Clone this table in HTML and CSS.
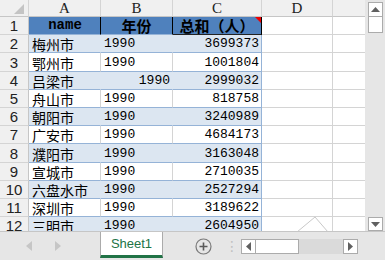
FILE: index.html
```html
<html lang="zh">
<head>
    <meta charset="UTF-8">
    <meta name="viewport" content="width=device-width, initial-scale=1.0">
    <title>Sheet1</title>
    <link rel="stylesheet" href="styles.css">
</head>
<body>
    <div class="app">
        <div class="top">
            <div class="sheet">
                <div class="grid">
                    <div class="row">
                        <div class="corner"><svg width="11" height="11"><polygon points="10,0 10,10 0,10" fill="#c4c4c4"/></svg></div>
                        <div class="colhead">A</div>
                        <div class="colhead">B</div>
                        <div class="colhead">C</div>
                        <div class="colhead">D</div>
                        <div class="colhead"></div>
                    </div>
                    <div class="row">
                        <div class="rowhead">1</div>
                        <div class="cell tc th">name</div>
                        <div class="cell tc th cjk">年份</div>
                        <div class="cell tc th cjk last note">总和（人）</div>
                        <div class="cell"></div>
                        <div class="cell"></div>
                    </div>
                    <div class="row alt">
                        <div class="rowhead">2</div>
                        <div class="cell tc cjk">梅州市</div>
                        <div class="cell tc">1990</div>
                        <div class="cell tc last num">3699373</div>
                        <div class="cell"></div>
                        <div class="cell"></div>
                    </div>
                    <div class="row">
                        <div class="rowhead">3</div>
                        <div class="cell tc cjk">鄂州市</div>
                        <div class="cell tc">1990</div>
                        <div class="cell tc last num">1001804</div>
                        <div class="cell"></div>
                        <div class="cell"></div>
                    </div>
                    <div class="row alt">
                        <div class="rowhead">4</div>
                        <div class="cell tc cjk">吕梁市</div>
                        <div class="cell tc num">1990</div>
                        <div class="cell tc last num">2999032</div>
                        <div class="cell"></div>
                        <div class="cell"></div>
                    </div>
                    <div class="row">
                        <div class="rowhead">5</div>
                        <div class="cell tc cjk">舟山市</div>
                        <div class="cell tc">1990</div>
                        <div class="cell tc last num">818758</div>
                        <div class="cell"></div>
                        <div class="cell"></div>
                    </div>
                    <div class="row alt">
                        <div class="rowhead">6</div>
                        <div class="cell tc cjk">朝阳市</div>
                        <div class="cell tc">1990</div>
                        <div class="cell tc last num">3240989</div>
                        <div class="cell"></div>
                        <div class="cell"></div>
                    </div>
                    <div class="row">
                        <div class="rowhead">7</div>
                        <div class="cell tc cjk">广安市</div>
                        <div class="cell tc">1990</div>
                        <div class="cell tc last num">4684173</div>
                        <div class="cell"></div>
                        <div class="cell"></div>
                    </div>
                    <div class="row alt">
                        <div class="rowhead">8</div>
                        <div class="cell tc cjk">濮阳市</div>
                        <div class="cell tc">1990</div>
                        <div class="cell tc last num">3163048</div>
                        <div class="cell"></div>
                        <div class="cell"></div>
                    </div>
                    <div class="row">
                        <div class="rowhead">9</div>
                        <div class="cell tc cjk">宣城市</div>
                        <div class="cell tc">1990</div>
                        <div class="cell tc last num">2710035</div>
                        <div class="cell"></div>
                        <div class="cell"></div>
                    </div>
                    <div class="row alt">
                        <div class="rowhead">10</div>
                        <div class="cell tc cjk">六盘水市</div>
                        <div class="cell tc">1990</div>
                        <div class="cell tc last num">2527294</div>
                        <div class="cell"></div>
                        <div class="cell"></div>
                    </div>
                    <div class="row">
                        <div class="rowhead">11</div>
                        <div class="cell tc cjk">深圳市</div>
                        <div class="cell tc">1990</div>
                        <div class="cell tc last num">3189622</div>
                        <div class="cell"></div>
                        <div class="cell"></div>
                    </div>
                    <div class="row alt">
                        <div class="rowhead">12</div>
                        <div class="cell tc cjk">三明市</div>
                        <div class="cell tc">1990</div>
                        <div class="cell tc last num">2604950</div>
                        <div class="cell"></div>
                        <div class="cell"></div>
                    </div>
                </div>
                <!-- floating shape on the sheet -->
                <svg class="shape" width="33" height="16"><polyline points="1,16 19,1 32,16" fill="none" stroke="#c8c8c8"/></svg>
            </div>
            <div class="vscroll">
                <div class="sbtn"><svg width="9" height="5"><polygon points="0,5 4.5,0 9,5" fill="#606060"/></svg></div>
                <div class="thumb"></div>
                <div class="track"></div>
                <div class="sbtn down"><svg width="9" height="5"><polygon points="0,0 9,0 4.5,5" fill="#606060"/></svg></div>
            </div>
        </div>
        <div class="bottom">
            <div class="nav">
                <svg width="6" height="10"><polygon points="6,0 6,10 0,5" fill="#c6c6c6"/></svg>
                <svg width="6" height="10"><polygon points="0,0 0,10 6,5" fill="#c6c6c6"/></svg>
            </div>
            <div class="tab">Sheet1</div>
            <svg class="add" width="17" height="17"><circle cx="8.5" cy="8.5" r="7.5" fill="none" stroke="#7a7a7a" stroke-width="1.2"/><path d="M4.5 8.5h8M8.5 4.5v8" stroke="#5a5a5a" stroke-width="1.6"/></svg>
            <div class="dots">⋮</div>
            <div class="hscroll">
                <div class="sbtn"><svg width="5" height="9"><polygon points="5,0 5,9 0,4.5" fill="#606060"/></svg></div>
                <div class="hthumb"></div>
                <div class="htrack"></div>
                <div class="sbtn"><svg width="5" height="9"><polygon points="0,0 0,9 5,4.5" fill="#606060"/></svg></div>
            </div>
        </div>
    </div>
</body>
</html>
```

FILE: styles.css
```css
*{
    margin: 0; padding: 0;
    box-sizing: border-box;
}
body{
    width: 385px;
    height: 260px;
    overflow: hidden;
    background-color: #e6e6e6;
    font-family: "Liberation Mono", monospace;
    color: #000;
}
.app{
    display: flex;
    flex-direction: column;
    height: 260px;
}
.top{
    display: flex;
    height: 232px;
    border-bottom: 1px solid #c6c6c6;
}
.sheet{
    position: relative;
    width: 365px;
    overflow: hidden;
    background-color: #fff;
}
.grid{
    display: grid;
    grid-template-columns: 29px 72px 72px 89px 71px 33px;
    grid-template-rows: 17px;
    grid-auto-rows: 18.2px;
}
.row{
    display: contents;
}
.corner, .colhead{
    background-color: #f0f0f0;
    border-right: 1px solid #d4d4d4;
    border-bottom: 1px solid #c6c6c6;
}
.corner{
    display: flex;
    justify-content: flex-end;
    align-items: flex-end;
    padding: 0 3px 1px 0;
}
.colhead{
    display: flex;
    justify-content: center;
    align-items: center;
    font-family: "Liberation Serif", serif;
    font-size: 15px;
    color: #222;
}
.rowhead{
    background-color: #f0f0f0;
    border-right: 1px solid #c6c6c6;
    border-bottom: 1px solid #d4d4d4;
    display: flex;
    justify-content: center;
    align-items: flex-end;
    padding-bottom: 1px;
    font-family: "Liberation Sans", sans-serif;
    font-size: 15px;
    line-height: 1;
    color: #222;
}
.cell{
    border-right: 1px solid #d4d4d4;
    border-bottom: 1px solid #d4d4d4;
    display: flex;
    align-items: flex-end;
    padding: 0 2px 2px 3px;
    font-size: 13px;
    line-height: 1;
    white-space: nowrap;
    overflow: hidden;
}
.tc{
    border-bottom-color: #95b3d7;
}
.alt .tc{
    background-color: #dce6f1;
    border-right-color: #dce6f1;
}
.tc.last{
    border-right-color: #95b3d7;
}
.cjk{
    font-family: "Noto Sans CJK SC", sans-serif;
    font-size: 14px;
    padding-bottom: 1px;
}
.num{
    justify-content: flex-end;
}
.th{
    background-color: #4f81bd;
    border-right-color: #000;
    font-size: 14px;
    font-weight: bold;
    justify-content: center;
    align-items: center;
    overflow: visible;
}
.th.cjk{
    font-size: 15px;
    padding: 0;
}
.th.last{
    border-right-color: #000;
    border-bottom-color: #222;
}
.note{
    position: relative;
}
/* comment marker */
.note::after{
    content: "";
    position: absolute;
    top: 0; right: 0;
    border-top: 6px solid #e00;
    border-left: 6px solid transparent;
}
.shape{
    position: absolute;
    left: 296px;
    top: 216px;
}
.vscroll{
    flex: 1;
    display: flex;
    flex-direction: column;
    padding: 2px 2px 0 3px;
}
.sbtn{
    width: 15px;
    height: 15px;
    background-color: #fff;
    border: 1px solid #ababab;
    display: flex;
    justify-content: center;
    align-items: center;
}
.sbtn.down{
    height: 14px;
}
.thumb{
    height: 16px;
    background-color: #fff;
    border: 1px solid #ababab;
    border-top: none;
}
.track{
    flex: 1;
}
.bottom{
    flex: 1;
    display: flex;
    align-items: center;
}
.nav{
    width: 100px;
    display: flex;
    gap: 23px;
    padding-left: 26px;
}
.tab{
    align-self: flex-start;
    width: 63px;
    height: 26px;
    background-color: #fff;
    border-left: 1px solid #ababab;
    border-right: 1px solid #ababab;
    border-bottom: 3px solid #217346;
    display: flex;
    justify-content: center;
    align-items: center;
    font-family: "Liberation Sans", sans-serif;
    font-size: 13px;
    color: #217346;
}
.add{
    margin-left: 32px;
}
.dots{
    margin-left: 13px;
    width: 16px;
    font-family: "DejaVu Sans", sans-serif;
    font-size: 14px;
    color: #c0c0c0;
}
.hscroll{
    display: flex;
    width: 117px;
    height: 15px;
}
.hthumb{
    width: 43px;
    background-color: #fff;
    border: 1px solid #ababab;
    border-left: none;
}
.htrack{
    flex: 1;
    background-color: #dadada;
}
```
